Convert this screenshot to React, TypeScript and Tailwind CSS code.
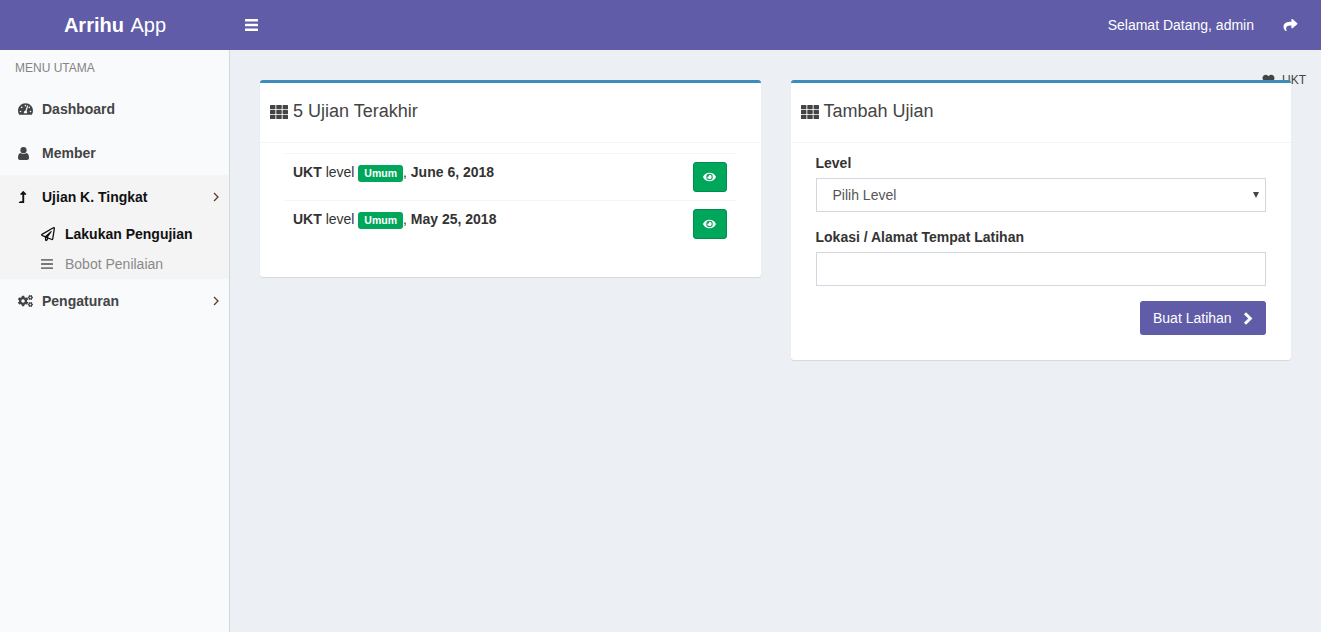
import React from "react";
import { FaShare, FaTachometerAlt, FaLevelUpAlt, FaRegPaperPlane, FaCogs, FaEye, FaHeart } from "react-icons/fa";

function Grid() {
  return (
    <svg width="18" height="14" viewBox="0 0 18 14" className="mr-[5px] shrink-0" fill="#444">
      {[0, 4.9, 9.8].map((y) =>
        [0, 6.3, 12.6].map((x) => <rect key={`${x}-${y}`} x={x} y={y} width="5.4" height="4.2" rx="0.5" />)
      )}
    </svg>
  );
}

function Bars({ w, h, bar, className }: { w: number; h: number; bar: number; className?: string }) {
  const mid = (h - bar) / 2;
  return (
    <svg width={w} height={h} viewBox={`0 0 ${w} ${h}`} className={className} fill="currentColor">
      <rect x="0" y="0" width={w} height={bar} rx="0.5" />
      <rect x="0" y={mid} width={w} height={bar} rx="0.5" />
      <rect x="0" y={h - bar} width={w} height={bar} rx="0.5" />
    </svg>
  );
}

function UserIcon() {
  return (
    <svg width="11" height="13" viewBox="0 0 11 13" fill="currentColor">
      <circle cx="5.5" cy="3.2" r="3.1" />
      <path d="M0 11c0-3 .8-4.7 2.6-4.9.8.6 1.8 1 2.9 1s2.1-.4 2.9-1C10.2 6.3 11 8 11 11c0 1.3-.8 2-2 2H2c-1.2 0-2-.7-2-2z" />
    </svg>
  );
}

function Angle() {
  return (
    <svg width="6" height="10" viewBox="0 0 6 10" fill="none" stroke="#5c3a2e" strokeWidth="1.3">
      <path d="M1 1l4 4-4 4" />
    </svg>
  );
}

function BoldChevron() {
  return (
    <svg width="10" height="13" viewBox="0 0 10 13" fill="none" stroke="white" strokeWidth="3" className="ml-[11px]">
      <path d="M2 1.2l5.3 5.3L2 11.8" />
    </svg>
  );
}

function Card({ title, children, h }: { title: string; children: React.ReactNode; h: string }) {
  return (
    <div className={`relative bg-white rounded-[3px] border-t-[3px] border-[#3c8dbc] shadow-[0_1px_1px_rgba(0,0,0,0.1)] ${h}`}>
      <div className="h-[60px] flex items-center pl-[10px] pb-[2px] border-b border-[#f4f4f4] text-[18px] text-[#444]">
        <Grid />
        <span className="text-[18px]">{title}</span>
      </div>
      {children}
    </div>
  );
}

function Row({ date }: { date: string }) {
  return (
    <div className="h-[47px] border-t border-[#f4f4f4] flex justify-between pl-[8px] pr-[9px] pt-[8px]">
      <div className="text-[14px] leading-[20px] text-[#333]">
        <b>UKT</b> level{" "}
        <span className="inline-block align-[0px] h-[17px] leading-[17px] px-[6px] bg-[#00a65a] rounded-[3px] text-white text-[10.5px] font-bold">Umum</span>
        , <b>{date}</b>
      </div>
      <button className="w-[34px] h-[30px] bg-[#00a65a] border border-[#008d4c] rounded-[3px] flex items-center justify-center text-white">
        <FaEye className="w-[13px] h-[12px]" />
      </button>
    </div>
  );
}

function NavItem({ icon, label, active, arrow }: { icon: React.ReactNode; label: string; active?: boolean; arrow?: boolean }) {
  return (
    <div className={`h-[44px] flex items-center pl-[18px] pr-[10px] text-[14px] font-bold ${active ? "text-[#111]" : "text-[#444]"}`}>
      <span className="w-[24px] flex">{icon}</span>
      <span className="flex-1">{label}</span>
      {arrow && <Angle />}
    </div>
  );
}

export default function App() {
  return (
    <div className="h-[632px] flex flex-col bg-[#ecf0f5] overflow-hidden font-['Liberation_Sans',Arial,sans-serif]">
      <header className="h-[50px] shrink-0 bg-[#605ca8] flex items-center text-white">
        <div className="w-[230px] text-center text-[20px]">
          <b>Arrihu</b> <span className="ml-[1px]">App</span>
        </div>
        <Bars w={13} h={12} bar={2.4} className="ml-[15px]" />
        <div className="ml-auto text-[14px] mr-[29px]">Selamat Datang, admin</div>
        <FaShare className="w-[15px] h-[14px] mr-[23px]" />
      </header>
      <div className="flex-1 flex">
        <aside className="w-[230px] shrink-0 bg-[#f9fafc] border-r border-[#d2d6de]">
          <div className="h-[37px] pl-[15px] pt-[12px] text-[12px] leading-[12px] text-[#848484]">MENU UTAMA</div>
          <NavItem icon={<FaTachometerAlt className="w-[15px] h-[14px]" />} label="Dashboard" />
          <NavItem icon={<UserIcon />} label="Member" />
          <div className="bg-[#f4f4f5]">
            <NavItem icon={<FaLevelUpAlt className="w-[9px] h-[12px]" />} label="Ujian K. Tingkat" active arrow />
            <div className="h-[30px] flex items-center pl-[41px] text-[14px] font-bold text-[#111]">
              <FaRegPaperPlane className="w-[14px] h-[14px] mr-[10px]" />
              Lakukan Pengujian
            </div>
            <div className="h-[30px] flex items-center pl-[41px] text-[14px] text-[#8a8a8a]">
              <Bars w={12} h={10} bar={1.8} className="mr-[12px] text-[#777]" />
              Bobot Penilaian
            </div>
          </div>
          <NavItem icon={<FaCogs className="w-[15px] h-[14px]" />} label="Pengaturan" arrow />
        </aside>
        <main className="relative flex-1 px-[30px] pt-[30px]">
          <div className="absolute left-[1032px] top-[21px] flex items-center text-[12px] text-[#444]">
            <FaHeart className="w-[13px] h-[12px] mr-[7px]" />
            UKT
          </div>
          <div className="relative grid grid-cols-2 gap-[30px] items-start">
            <Card title="5 Ujian Terakhir" h="h-[197px]">
              <div className="mx-[25px] mt-[10px]">
                <Row date="June 6, 2018" />
                <Row date="May 25, 2018" />
              </div>
            </Card>
            <Card title="Tambah Ujian" h="h-[280px]">
              <div className="px-[25px] pt-[10px]">
                <label className="block text-[14px] leading-[20px] font-bold text-[#333] mb-[5px]">Level</label>
                <div className="relative h-[34px] border border-[#d2d6de] flex items-center pl-[16px] text-[14px] text-[#555]">
                  Pilih Level
                  <span className="absolute right-[6px] top-[13px] w-0 h-0 border-x-[3px] border-x-transparent border-t-[6px] border-t-[#444]" />
                </div>
                <label className="block text-[14px] leading-[20px] font-bold text-[#333] mt-[15px] mb-[5px]">Lokasi / Alamat Tempat Latihan</label>
                <input className="block w-full h-[34px] border border-[#d2d6de] bg-white" />
                <div className="flex justify-end mt-[15px]">
                  <button className="w-[126px] h-[34px] pl-[13px] bg-[#605ca8] rounded-[3px] text-white text-[14px] flex items-center justify-start">
                    Buat Latihan
                    <BoldChevron />
                  </button>
                </div>
              </div>
            </Card>
          </div>
        </main>
      </div>
    </div>
  );
}
